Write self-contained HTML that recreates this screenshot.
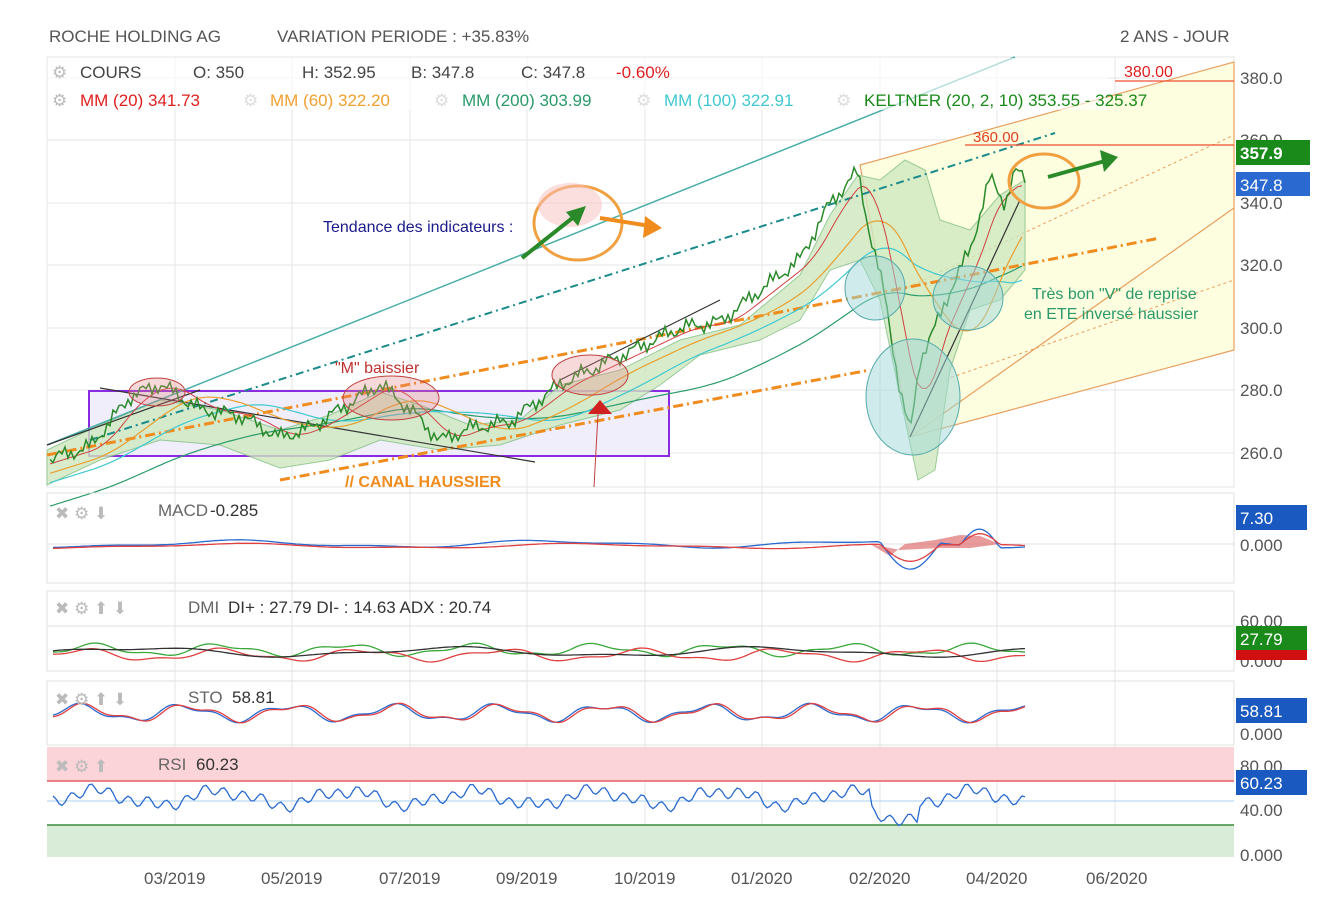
<!DOCTYPE html>
<html><head><meta charset="utf-8"><style>
body{margin:0;background:#fff;font-family:"Liberation Sans",sans-serif}
svg text{font-family:"Liberation Sans",sans-serif}
</style></head><body>
<svg id="s" width="1338" height="900" viewBox="0 0 1338 900" xmlns="http://www.w3.org/2000/svg">
<rect width="1338" height="900" fill="#fff"/>
<text x="49" y="42" font-size="17" fill="#555">ROCHE HOLDING AG</text>
<text x="277" y="42" font-size="17" fill="#555">VARIATION PERIODE : +35.83%</text>
<text x="1120" y="42" font-size="17" fill="#555">2 ANS - JOUR</text>
<g stroke="#e6e6e6" stroke-width="1" fill="none">
<rect x="47" y="57" width="1187" height="430"/>
<path d="M47 78H1234M47 140H1234M47 203H1234M47 265H1234M47 328H1234M47 390H1234M47 453H1234"/>
<path d="M175 57V857M292 57V857M410 57V857M527 57V857M645 57V857M762 57V857M880 57V857M997 57V857M1115 57V857"/>
</g>
<polygon points="860,165 1234,62 1234,350 910,437" fill="#fdfde0"/>
<polygon points="860,165 1234,62 1234,350 910,437" fill="none" stroke="#e8a060" stroke-width="1.2"/>
<line x1="910" y1="437" x2="1234" y2="208" stroke="#e8a060" stroke-width="1.2"/>
<line x1="880" y1="300" x2="1234" y2="135" stroke="#e8a060" stroke-width="1" stroke-dasharray="3,3"/>
<line x1="900" y1="395" x2="1234" y2="280" stroke="#e8a060" stroke-width="1" stroke-dasharray="3,3"/>
<rect x="89" y="391" width="580" height="65" fill="#f0eefa" stroke="#8a2be2" stroke-width="2"/>
<polygon points="47,450 100,425 160,400 220,410 280,430 330,415 380,392 420,405 470,425 520,420 560,385 620,370 680,340 740,325 800,275 830,215 858,175 880,180 905,160 925,170 940,220 970,230 1000,195 1025,180 1025,270 1000,300 970,310 950,370 935,470 918,480 905,420 880,300 860,260 830,270 800,320 760,340 700,355 660,385 620,410 560,425 500,445 440,450 380,440 330,460 280,468 220,445 160,440 100,460 47,485" fill="#cfe8c0" opacity="0.8" stroke="#7fbf7f" stroke-width="1"/>
<line x1="47" y1="445" x2="1015" y2="57" stroke="#4aaea8" stroke-width="1.5"/>
<line x1="47" y1="455" x2="1160" y2="238" stroke="#f08c1e" stroke-width="3" stroke-dasharray="10,4,2,4"/>
<line x1="280" y1="480" x2="870" y2="370" stroke="#f08c1e" stroke-width="3" stroke-dasharray="10,4,2,4"/>
<line x1="90" y1="440" x2="1055" y2="133" stroke="#1a8a8a" stroke-width="2" stroke-dasharray="8,4,2,4"/>
<line x1="100" y1="388" x2="535" y2="462" stroke="#333" stroke-width="1.2"/>
<line x1="47" y1="445" x2="200" y2="390" stroke="#333" stroke-width="1.2"/>
<line x1="560" y1="380" x2="720" y2="300" stroke="#333" stroke-width="1.2"/>
<line x1="910" y1="437" x2="1020" y2="200" stroke="#333" stroke-width="1.2"/>
<line x1="965" y1="145" x2="1234" y2="145" stroke="#f05030" stroke-width="1.2"/>
<line x1="1115" y1="81" x2="1234" y2="81" stroke="#f05030" stroke-width="1.2"/>
<text x="973" y="142" font-size="15" fill="#e04020">360.00</text>
<polyline id="ma3" fill="none" stroke="#2a9a6a" stroke-width="1.2"/>
<polyline id="ma2" fill="none" stroke="#40c8d0" stroke-width="1.2"/>
<polyline id="ma1" fill="none" stroke="#e8a030" stroke-width="1.2"/>
<polyline id="ma0" fill="none" stroke="#d04040" stroke-width="1"/>
<polyline id="price" fill="none" stroke="#2a8a2a" stroke-width="1.5"/>
<g fill="#e88080" fill-opacity="0.3" stroke="#c04040" stroke-width="1">
<ellipse cx="157" cy="392" rx="28" ry="14"/><ellipse cx="391" cy="398" rx="48" ry="22"/><ellipse cx="590" cy="375" rx="38" ry="20"/>
</g>
<g fill="#a0d8d8" fill-opacity="0.5" stroke="#5aa" stroke-width="1">
<ellipse cx="913" cy="397" rx="47" ry="58"/><ellipse cx="875" cy="288" rx="30" ry="32"/><ellipse cx="968" cy="298" rx="35" ry="32"/>
</g>
<ellipse cx="1044" cy="181" rx="35" ry="27" fill="none" stroke="#f0a040" stroke-width="3"/>
<ellipse cx="578" cy="223" rx="44" ry="37" fill="none" stroke="#f0a040" stroke-width="3"/>
<ellipse cx="570" cy="205" rx="32" ry="22" fill="#f8c0c0" opacity="0.5"/>
<line x1="522" y1="258" x2="580" y2="212" stroke="#2a8a2a" stroke-width="4"/><polygon points="586,206 566,212 578,226" fill="#2a8a2a"/>
<line x1="600" y1="218" x2="650" y2="226" stroke="#f08c1e" stroke-width="4"/><polygon points="662,228 645,216 643,238" fill="#f08c1e"/>
<line x1="1048" y1="177" x2="1105" y2="161" stroke="#2a8a2a" stroke-width="4"/><polygon points="1118,157 1100,150 1104,172" fill="#2a8a2a"/>
<polygon points="600,400 588,414 612,414" fill="#d02020"/><line x1="598" y1="414" x2="594" y2="487" stroke="#c04040"/>
<text x="323" y="232" font-size="16" fill="#1a1a8a">Tendance des indicateurs :</text>
<text x="335" y="373" font-size="16" fill="#c03030">"M" baissier</text>
<text x="345" y="487" font-size="16" fill="#f08c1e" font-weight="bold">// CANAL HAUSSIER</text>
<text x="1032" y="299" font-size="16" fill="#2a9a6a">Très bon "V" de reprise</text>
<text x="1024" y="319" font-size="16" fill="#2a9a6a">en ETE inversé haussier</text>
<rect x="48" y="58" width="1060" height="52" fill="#fff" opacity="0.6"/>
<text x="1124" y="77" font-size="16" fill="#e02020">380.00</text>
<g font-size="17">
<text x="52" y="78" fill="#bbb">⚙</text><text x="80" y="78" fill="#444">COURS</text>
<text x="193" y="78" fill="#444">O: 350</text><text x="302" y="78" fill="#444">H: 352.95</text>
<text x="411" y="78" fill="#444">B: 347.8</text><text x="521" y="78" fill="#444">C: 347.8</text>
<text x="616" y="78" fill="#e02020">-0.60%</text>
<text x="52" y="106" fill="#bbb">⚙</text><text x="80" y="106" fill="#e02020">MM (20) 341.73</text>
<text x="243" y="106" fill="#ddd">⚙</text><text x="270" y="106" fill="#f0a030">MM (60) 322.20</text>
<text x="434" y="106" fill="#ddd">⚙</text><text x="462" y="106" fill="#2a9a6a">MM (200) 303.99</text>
<text x="636" y="106" fill="#ddd">⚙</text><text x="664" y="106" fill="#40c8d0">MM (100) 322.91</text>
<text x="836" y="106" fill="#ddd">⚙</text><text x="864" y="106" fill="#1a8a1a">KELTNER (20, 2, 10) 353.55 - 325.37</text>
</g>
<g font-size="17" fill="#555">
<text x="1240" y="84">380.0</text><text x="1240" y="146">360.0</text><text x="1240" y="209">340.0</text><text x="1240" y="271">320.0</text><text x="1240" y="334">300.0</text><text x="1240" y="396">280.0</text><text x="1240" y="459">260.0</text>
</g>
<rect x="1236" y="140" width="74" height="25" fill="#1a8a1a"/><text x="1240" y="159" font-size="17" fill="#fff" font-weight="bold">357.9</text>
<rect x="1236" y="172" width="74" height="24" fill="#2a6ad0"/><text x="1240" y="191" font-size="17" fill="#fff">347.8</text>
<g stroke="#e0e0e0" fill="none">
<rect x="47" y="493" width="1187" height="90"/><line x1="47" y1="544" x2="1234" y2="544"/>
<rect x="47" y="591" width="1187" height="80"/><line x1="47" y1="626" x2="1234" y2="626"/>
<rect x="47" y="681" width="1187" height="64"/>
</g>
<rect x="47" y="747" width="1187" height="34" fill="#fad4d8"/>
<line x1="47" y1="781" x2="1234" y2="781" stroke="#e06060" stroke-width="1.5"/>
<line x1="47" y1="801" x2="1234" y2="801" stroke="#a8d0f0"/>
<rect x="47" y="825" width="1187" height="32" fill="#d8ecd8"/>
<line x1="47" y1="825" x2="1234" y2="825" stroke="#3a8a3a" stroke-width="1.5"/>
<polygon points="870,544 890,556 905,544 935,540 960,535 980,536 1000,544 970,548 940,548 900,550" fill="#e07070" opacity="0.7"/>
<polyline id="m1" fill="none" stroke="#2a6ad0" stroke-width="1.3"/><polyline id="m2" fill="none" stroke="#e04040" stroke-width="1.3"/>
<polyline id="d1" fill="none" stroke="#3aa83a" stroke-width="1.3"/><polyline id="d2" fill="none" stroke="#e04040" stroke-width="1.3"/><polyline id="d3" fill="none" stroke="#333" stroke-width="1.3"/>
<polyline id="s1" fill="none" stroke="#2a6ad0" stroke-width="1.3"/><polyline id="s2" fill="none" stroke="#e04040" stroke-width="1.3"/>
<polyline id="r1" fill="none" stroke="#2a6ad0" stroke-width="1.3"/>
<g font-size="17" fill="#bbb">
<text x="55" y="519">✖ ⚙ ⬇</text><text x="158" y="516" fill="#666">MACD</text><text x="210" y="516" fill="#333">-0.285</text>
<text x="55" y="614">✖ ⚙ ⬆ ⬇</text><text x="188" y="613" fill="#666">DMI</text><text x="228" y="613" fill="#333">DI+ : 27.79 DI- : 14.63 ADX : 20.74</text>
<text x="55" y="705">✖ ⚙ ⬆ ⬇</text><text x="188" y="703" fill="#666">STO</text><text x="232" y="703" fill="#333">58.81</text>
<text x="55" y="772">✖ ⚙ ⬆</text><text x="158" y="770" fill="#666">RSI</text><text x="196" y="770" fill="#333">60.23</text>
</g>
<g font-size="17" fill="#555">
<text x="1240" y="551">0.000</text><text x="1240" y="627">60.00</text><text x="1240" y="667">0.000</text>
<text x="1240" y="740">0.000</text><text x="1240" y="772">80.00</text><text x="1240" y="816">40.00</text><text x="1240" y="861">0.000</text>
</g>
<rect x="1236" y="505" width="71" height="25" fill="#1a5ac0"/><text x="1240" y="524" font-size="17" fill="#fff">7.30</text>
<rect x="1236" y="649" width="71" height="11" fill="#d01010"/>
<rect x="1236" y="626" width="71" height="24" fill="#1a8a1a"/><text x="1240" y="645" font-size="17" fill="#fff">27.79</text>
<rect x="1236" y="698" width="71" height="25" fill="#1a5ac0"/><text x="1240" y="717" font-size="17" fill="#fff">58.81</text>
<rect x="1236" y="770" width="71" height="25" fill="#1a5ac0"/><text x="1240" y="789" font-size="17" fill="#fff">60.23</text>
<g font-size="17" fill="#555">
<text x="144" y="884">03/2019</text><text x="261" y="884">05/2019</text><text x="379" y="884">07/2019</text><text x="496" y="884">09/2019</text><text x="614" y="884">10/2019</text><text x="731" y="884">01/2020</text><text x="849" y="884">02/2020</text><text x="966" y="884">04/2020</text><text x="1086" y="884">06/2020</text>
</g>
</svg>
<script>
var P=[[50,258],[90,262],[130,278],[160,282],[200,274],[240,272],[280,265],[310,268],[350,276],[380,282],[410,274],[440,264],[470,268],[510,270],[560,282],[600,288],[640,294],[680,300],[720,302],[760,312],[800,322],[830,340],[858,350],[870,330],[885,310],[900,280],[910,266],[920,290],[935,300],[950,312],[970,325],[990,348],[1005,340],[1015,350],[1025,348]];
function y(v){return 78+(380-v)*3.125}
function interp(x){if(x<50)return 258+(x-50)*0.1;for(var i=1;i<P.length;i++){if(x<=P[i][0]){var a=P[i-1],b=P[i],t=(x-a[0])/(b[0]-a[0]);return a[1]+(b[1]-a[1])*t}}return P[P.length-1][1]}
function sma(x,n){var s=0,c=0;for(var k=x-n;k<=x;k+=2){s+=interp(k);c++}return s/c}
function set(id,pts){document.getElementById(id).setAttribute('points',pts.join(' '))}
var pr=[];
for(var x=50;x<=1025;x+=3){var v=interp(x)+Math.sin(x*0.9)*1.5+Math.sin(x*0.23)*1.5;pr.push(x+','+y(v).toFixed(1));}
set('price',pr);
[['ma0',30],['ma1',90],['ma2',150],['ma3',300]].forEach(function(m){var p=[];for(var x=50;x<=1025;x+=4){p.push(x+','+y(sma(x,m[1])).toFixed(1))}set(m[0],p)});
function w(id,base,amp,f,ph,ex){var p=[];for(var x=53;x<=1025;x+=3){var v=base+amp*Math.sin(x*f+ph)+amp*0.4*Math.sin(x*f*2.3+ph);if(ex)v+=ex(x);p.push(x+','+v.toFixed(1))}set(id,p)}
var cr=function(x){return x>880&&x<940?28*Math.sin((x-880)/60*Math.PI):(x>960&&x<1000?-18*Math.sin((x-960)/40*Math.PI):0)};
w('m1',544,3,0.02,0,cr);w('m2',546,2,0.018,0.5,function(x){return cr(x)*0.6});
w('d1',650,5,0.05,0);w('d2',655,5,0.045,1);w('d3',652,4,0.02,2);
w('s1',713,7,0.06,0);w('s2',713,7,0.06,-0.3);
w('r1',798,7,0.05,0,function(x){return 5*Math.sin(x*0.33)+(x>870&&x<920?16:0)});
</script>
</body></html>
